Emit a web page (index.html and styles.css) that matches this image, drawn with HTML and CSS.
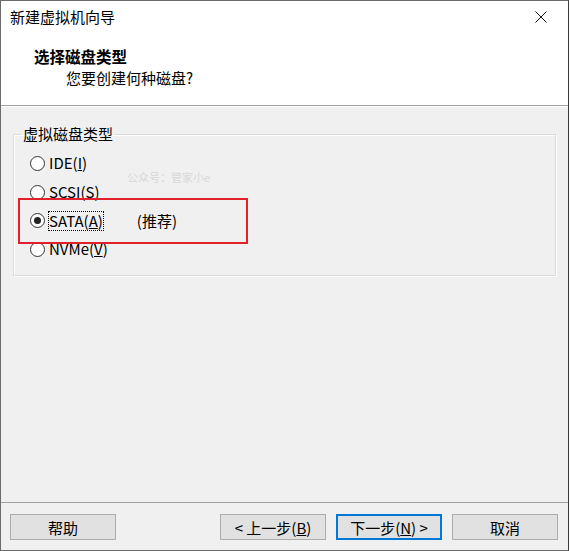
FILE: index.html
```html
<!DOCTYPE html>
<html lang="zh-CN">
  <head>
    <meta charset="UTF-8" />
    <title>新建虚拟机向导</title>
    <link rel="stylesheet" href="styles.css">
  </head>
  <body>
    <div class="window">
      <div class="titlebar">
        <span class="title">新建虚拟机向导</span>
        <span class="close">
          <svg width="12" height="12" viewBox="0 0 12 12">
            <path d="M0.5 0.5 L11.5 11.5 M11.5 0.5 L0.5 11.5" stroke="#111" stroke-width="1" />
          </svg>
        </span>
      </div>

      <div class="header">
        <div class="header-title">选择磁盘类型</div>
        <div class="header-sub">您要创建何种磁盘?</div>
      </div>

      <div class="content">
        <fieldset class="group">
          <legend>虚拟磁盘类型</legend>
          <div class="options">
            <div class="radio-row">
              <span class="radio"></span>
              <span class="label">IDE(<u>I</u>)</span>
            </div>
            <div class="radio-row">
              <span class="radio"></span>
              <span class="label">SCSI(S)</span>
            </div>
            <div class="radio-row">
              <span class="radio checked"></span>
              <span class="label focused">SATA(<u>A</u>)</span>
              <span class="hint">(推荐)</span>
            </div>
            <div class="radio-row">
              <span class="radio"></span>
              <span class="label">NVMe(<u>V</u>)</span>
            </div>
          </div>
        </fieldset>
        <div class="watermark">公众号：管家小e</div>
        <div class="highlight"></div>
      </div>

      <div class="footer">
        <button class="btn">帮助</button>
        <div class="spacer"></div>
        <button class="btn">&lt; 上一步(<u>B</u>)</button>
        <button class="btn default">下一步(<u>N</u>) &gt;</button>
        <button class="btn">取消</button>
      </div>
    </div>
  </body>
</html>
```

FILE: styles.css
```css
body {
  margin: 0;
  padding: 0;
  background: #ffffff;
  font-family: "Noto Sans CJK SC", sans-serif;
  color: #000;
}

.window {
  width: 569px;
  height: 551px;
  box-sizing: border-box;
  border: 1px solid #6b6b6b;
  border-right-color: #3c3c3c;
  display: flex;
  flex-direction: column;
  background: #f0f0f0;
}

.titlebar {
  height: 31px;
  background: #fff;
  display: flex;
  align-items: center;
  justify-content: space-between;
  padding: 0 0 0 9px;
}

.title {
  font-size: 15px;
  line-height: 1;
}

.close {
  width: 46px;
  height: 31px;
  display: flex;
  align-items: center;
  justify-content: center;
  margin-right: 4px;
}

.header {
  height: 74px;
  background: #fff;
  border-bottom: 1px solid #a0a0a0;
  box-shadow: 0 1px 0 #ffffff;
  padding-left: 33px;
  box-sizing: border-box;
}

.header-title {
  font-weight: bold;
  font-size: 15.5px;
  line-height: 20px;
  margin-top: 14px;
}

.header-sub {
  font-size: 15px;
  line-height: 20px;
  margin-top: 2px;
  padding-left: 32px;
}

.content {
  flex: 1;
  position: relative;
  padding: 18px 12px 0 12px;
  border-bottom: 1px solid #a0a0a0;
}

.group {
  margin: 0;
  height: 152px;
  box-sizing: border-box;
  border: 1px solid #dcdcdc;
  box-shadow: inset 1px 1px 0 #fff, 1px 1px 0 #fff;
  padding: 0;
}

.group legend {
  font-size: 15px;
  line-height: 20px;
  padding: 0 1px;
  margin-left: 8px;
}

.options {
  padding: 5px 0 0 16px;
}

.radio-row {
  display: flex;
  align-items: center;
  height: 28.7px;
}

.radio {
  width: 15px;
  height: 15px;
  border: 1px solid #333;
  border-radius: 50%;
  background: #fff;
  box-sizing: border-box;
  position: relative;
  margin-right: 3px;
}

.radio.checked::after {
  content: "";
  position: absolute;
  left: 3px;
  top: 3px;
  width: 7px;
  height: 7px;
  border-radius: 50%;
  background: #222;
}

.label {
  font-size: 15px;
  line-height: 20px;
  padding: 0 1px;
}

.label.focused {
  outline: 1px dotted #000;
  outline-offset: -1px;
}

.hint {
  font-size: 15px;
  margin-left: 33px;
}

.watermark {
  position: absolute;
  left: 126px;
  top: 63px;
  font-size: 11px;
  color: #d8d8d8;
}

.highlight {
  position: absolute;
  left: 17px;
  top: 92px;
  width: 230px;
  height: 46px;
  box-sizing: border-box;
  border: 2px solid #e0202a;
}

.footer {
  height: 47px;
  display: flex;
  align-items: flex-start;
  padding: 11px 10px 0 9px;
  box-sizing: border-box;
  gap: 10px;
}

.spacer {
  flex: 1;
}

.btn {
  width: 106px;
  height: 26px;
  background: #e1e1e1;
  border: 1px solid #adadad;
  font-family: "Noto Sans CJK SC", sans-serif;
  font-size: 15px;
  line-height: 1;
  padding: 0;
  color: #000;
}

.btn.default {
  border: 2px solid #0078d7;
}
```
